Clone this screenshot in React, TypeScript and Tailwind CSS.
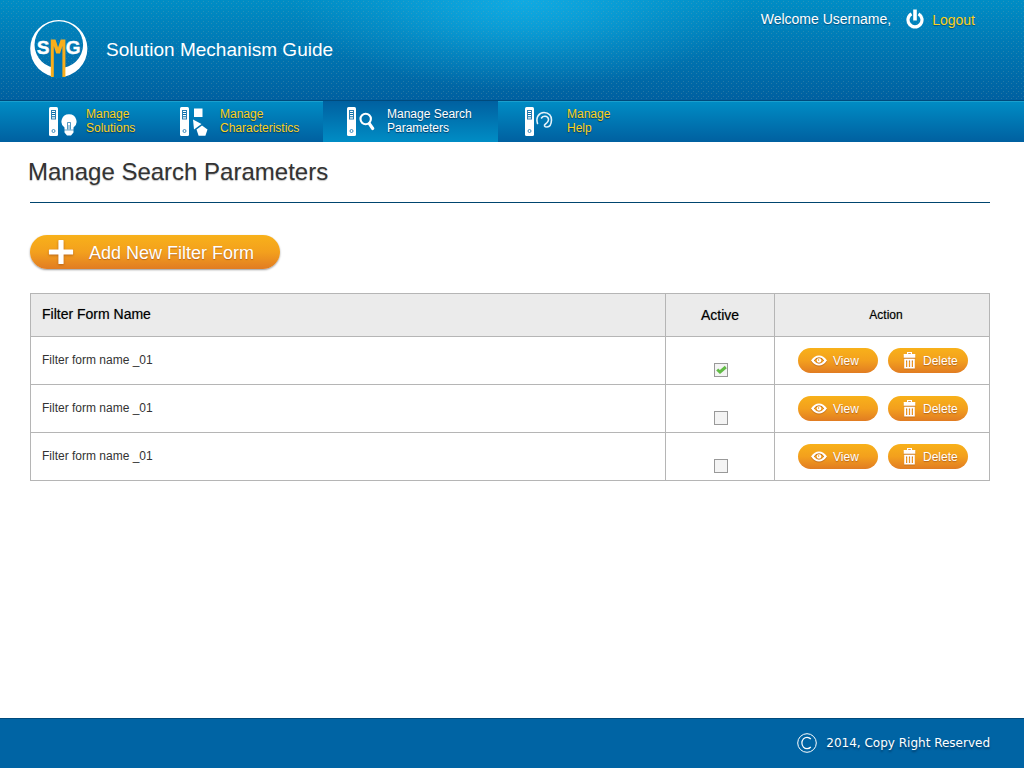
import { useState } from "react";
import type { ReactNode } from "react";

function Logo() {
  return (
    <svg viewBox="0 0 60 60" className="size-[60px] shrink-0" role="img" aria-label="SMG">
      <path
        fillRule="evenodd"
        fill="#fff"
        d="M29.800 1A28.600 28.600 0 1 1 29.800 58.200A28.600 28.600 0 1 1 29.800 1ZM29.800 2.200A24.300 23.600 0 1 0 29.800 49.400A24.300 23.600 0 1 0 29.800 2.200Z"
      />
      <path fill="#0074b3" d="M22 30H36V59H22Z" />
      <g fontFamily="'Liberation Sans', Arial, sans-serif" fontWeight="bold" fontSize="19">
        <text x="7.700" y="34.500" fill="#fff" stroke="#fff" strokeWidth="0.400">S</text>
        <text x="36.700" y="34.500" fill="#fff" stroke="#fff" strokeWidth="0.400">G</text>
      </g>
      <path fill="#f9ae1b" d="M21.800 20.500H26.500L29.100 28.500L31.700 20.500H36.400V58H33.400V27L31 34.500H27.200L24.800 27V58H21.800Z" />
    </svg>
  );
}

function Remote() {
  return (
    <>
      <rect x="0" y="0" width="9" height="29" rx="1.5" fill="#fff" />
      <rect x="2.500" y="3.500" width="4" height="8.500" fill="#fff" stroke="#2a7fb3" strokeWidth="1" />
      <path d="M3 5.500H6M3 7.500H6M3 9.800H6" stroke="#0a6fa8" strokeWidth="1.100" />
      <circle cx="4.500" cy="24" r="1.500" fill="none" stroke="#2a7fb3" strokeWidth="0.900" />
    </>
  );
}

function SolutionsIcon() {
  return (
    <svg viewBox="0 0 28 30" className="h-[30px] w-7 shrink-0" aria-hidden="true">
      <Remote />
      <path fill="#fff" d="M20 7.300A7.300 7.300 0 0 1 24.500 20.500V25.500L22 28.500H18L15.500 25.500V20.500A7.300 7.300 0 0 1 20 7.300Z" />
      <path d="M15 23H25" stroke="#0a6fa8" strokeWidth="0.600" />
      <path d="M18.500 22.500V15.500H21.500V22.500M20 18V22.500" fill="none" stroke="#0a6fa8" strokeWidth="0.700" />
    </svg>
  );
}

function CharacteristicsIcon() {
  return (
    <svg viewBox="0 0 28 30" className="h-[30px] w-7 shrink-0" aria-hidden="true">
      <Remote />
      <path fill="#fff" d="M14 1.500H22.500V10H14ZM13 12.500L21.500 17L14 22.500ZM22 18.500L27.500 22.500L25.400 28.800H18.600L16.500 22.500Z" />
    </svg>
  );
}

function SearchIcon() {
  return (
    <svg viewBox="0 0 28 30" className="h-[30px] w-7 shrink-0" aria-hidden="true">
      <Remote />
      <circle cx="18.700" cy="12" r="5.200" fill="none" stroke="#fff" strokeWidth="2.100" />
      <path d="M22.500 16.800L25.700 21.500" stroke="#fff" strokeWidth="3.200" strokeLinecap="round" />
    </svg>
  );
}

function HelpIcon() {
  return (
    <svg viewBox="0 0 28 30" className="h-[30px] w-7 shrink-0" aria-hidden="true">
      <Remote />
      <path
        d="M12.500 16.500C10.500 10.500 14 5.500 19 5.500C24 5.500 26.700 9 26.500 13C26.300 17 24.500 20 22 20C19.500 20 18.500 18.500 20.500 17C22.500 15.500 24 14 23.400 11.800C22.500 8.500 18 8.500 16.500 11"
        fill="none"
        stroke="#e4f2fa"
        strokeWidth="1.600"
        strokeLinecap="round"
      />
    </svg>
  );
}

function PowerIcon() {
  return (
    <svg viewBox="0 0 18 20" className="h-5 w-[18px]" aria-hidden="true">
      <path d="M5.500 4.800A7 7 0 1 0 12.500 4.800" fill="none" stroke="#fff" strokeWidth="3.200" />
      <path d="M7.200 0.500H10.800V11.500H7.200Z" fill="#fff" />
    </svg>
  );
}

function EyeIcon() {
  return (
    <svg viewBox="0 0 16 12" className="h-3 w-4 shrink-0 drop-shadow-[0_1px_0_#c7701a]" aria-hidden="true">
      <path fill="#fff" fillRule="evenodd" d="M0 5.500Q3.500 0.500 8 0.500T16 5.500Q12.500 10.500 8 10.500T0 5.500ZM2.800 5.500Q5 8.700 8 8.700T13.200 5.500Q11 2.300 8 2.300T2.800 5.500Z" />
      <circle cx="8" cy="5.500" r="2.300" fill="#fff" />
      <circle cx="7.600" cy="5" r="0.700" fill="#e98f1e" />
    </svg>
  );
}

function TrashIcon() {
  return (
    <svg viewBox="0 0 13 17" className="h-[17px] w-[13px] shrink-0 drop-shadow-[0_1px_0_#c7701a]" aria-hidden="true">
      <path fill="#fff" fillRule="evenodd" d="M4 0H9V2H12.300V5.800H0.700V2H4ZM5.200 1.200V2H7.800V1.200Z" />
      <path fill="#fff" fillRule="evenodd" d="M1.200 6.700H11.800V16.500H1.200ZM3 8.500V15H4.200V8.500ZM5.900 8.500V15H7.100V8.500ZM8.800 8.500V15H10V8.500Z" />
    </svg>
  );
}

function PlusIcon() {
  return (
    <svg viewBox="0 0 26 26" className="size-[26px] shrink-0 drop-shadow-[0_1px_1px_#b8651a]" aria-hidden="true">
      <path d="M11 1.500H15V11H24.500V15H15V24.500H11V15H1.500V11H11Z" fill="#fff" stroke="#fff" strokeWidth="1.200" strokeLinejoin="round" />
    </svg>
  );
}

type NavItem = { lines: [string, string]; icon: ReactNode; active?: boolean; className: string };

const navItems: NavItem[] = [
  { lines: ["Manage", "Solutions"], icon: <SolutionsIcon />, className: "w-[132px] gap-[9px] pl-[19px]" },
  { lines: ["Manage", "Characteristics"], icon: <CharacteristicsIcon />, className: "w-[161px] gap-3 pl-[18px]" },
  { lines: ["Manage Search", "Parameters"], icon: <SearchIcon />, active: true, className: "w-[175px] gap-3 pl-6" },
  { lines: ["Manage", "Help"], icon: <HelpIcon />, className: "w-[161px] gap-[14px] pl-[27px]" },
];

function PillButton({ icon, children, className }: { icon: ReactNode; children: ReactNode; className: string }) {
  return (
    <button
      type="button"
      className={`flex h-[25px] w-20 cursor-pointer items-center rounded-full bg-linear-to-b from-[#f8b11a] via-[#f3a01d] to-[#e17c22] text-xs text-white [text-shadow:0_1px_1px_#b8651a] ${className}`}
    >
      {icon}
      {children}
    </button>
  );
}

type Row = { id: number; name: string; active: boolean };

export default function App() {
  const [rows, setRows] = useState<Row[]>([
    { id: 1, name: "Filter form name _01", active: true },
    { id: 2, name: "Filter form name _01", active: false },
    { id: 3, name: "Filter form name _01", active: false },
  ]);

  const toggle = (id: number) =>
    setRows((all) => all.map((r) => (r.id === id ? { ...r, active: !r.active } : r)));

  return (
    <div className="flex min-h-screen flex-col bg-white font-['Liberation_Sans',Arial,sans-serif]">
      <header>
        <div className="bg-[radial-gradient(circle_at_3.5px_1.5px,#7fa3a54d_0.5px,transparent_0.9px),radial-gradient(circle_at_1.5px_3.5px,#7fa3a54d_0.5px,transparent_0.9px),radial-gradient(ellipse_230px_90px_at_51%_0,#10aae2_0%,#10aae2b3_30%,#10aae24d_65%,transparent_100%),linear-gradient(#008dc5,#0060a0)] bg-size-[5px_5px,5px_5px,auto,auto]">
          <div className="flex h-[100px] items-start justify-between pr-[49px] pl-[29px]">
            <div className="flex items-center gap-[17px] pt-[19px]">
              <Logo />
              <p className="pt-0.5 text-[19px] text-white">Solution Mechanism Guide</p>
            </div>
            <div className="flex items-center gap-[15px] pt-2 text-sm text-white [text-shadow:0_1px_1px_#00507f]">
              <span>Welcome Username,</span>
              <a href="#logout" className="flex items-center gap-2 text-[#fbd21c]">
                <PowerIcon />
                <span className="pt-0.5">Logout</span>
              </a>
            </div>
          </div>
        </div>
        <nav className="flex h-[42px] border-t border-[#004a7c] bg-linear-to-b from-[#008dc5] to-[#0060a0] pl-[30px] shadow-[inset_0_1px_0_#1a9fce]">
          {navItems.map((item) => (
            <a
              key={item.lines.join(" ")}
              href="#section"
              aria-current={item.active ? "page" : undefined}
              className={`flex items-center text-xs leading-[14px] [text-shadow:0_1px_1px_#003a66] ${item.className} ${
                item.active ? "bg-linear-to-b from-[#0060a0] to-[#008dc5] text-white" : "text-[#fbd21c]"
              }`}
            >
              {item.icon}
              <span className="pb-0.5">
                {item.lines[0]}
                <br />
                {item.lines[1]}
              </span>
            </a>
          ))}
        </nav>
      </header>

      <main className="flex-1 pr-[34px] pl-[30px]">
        <h1 className="-mx-0.5 pt-3 text-2xl leading-9 text-[#333] [text-shadow:0_1px_1px_#00000040]">
          Manage Search Parameters
        </h1>
        <hr className="mt-3 border-[#00456f]" />

        <button
          type="button"
          className="mt-8 flex h-[34px] w-[250px] cursor-pointer items-center gap-[15px] rounded-full bg-linear-to-b from-[#f8b11a] via-[#f3a01d] to-[#e17c22] pl-[18px] text-lg text-white shadow-[0_1px_2px_#00000066] [text-shadow:0_1px_1px_#b8651a]"
        >
          <PlusIcon />
          <span className="pt-0.5">Add New Filter Form</span>
        </button>

        <table className="mt-6 w-full table-fixed border-collapse text-xs text-[#333] [&_td]:border [&_td]:border-[#b5b5b5] [&_th]:border [&_th]:border-[#b5b5b5]">
          <thead>
            <tr className="h-[43px] bg-[#ebebeb] text-black [text-shadow:0_0_1px_#00000066]">
              <th className="px-[11px] pb-0.5 text-left text-sm font-normal">Filter Form Name</th>
              <th className="w-[109px] text-sm font-normal">Active</th>
              <th className="w-[215px] pl-2 font-normal">Action</th>
            </tr>
          </thead>
          <tbody>
            {rows.map((row) => (
              <tr key={row.id} className="h-12">
                <td className="px-[11px] pb-0.5">{row.name}</td>
                <td className="pl-0.5">
                  <label className="mx-auto mt-[18px] grid size-3.5 place-items-center">
                    <input
                      type="checkbox"
                      aria-label={`Active: ${row.name}`}
                      checked={row.active}
                      onChange={() => toggle(row.id)}
                      className="peer col-start-1 row-start-1 size-3.5 appearance-none border border-[#999] bg-[#f4f4f4]"
                    />
                    <svg
                      viewBox="0 0 11 9"
                      className="pointer-events-none invisible col-start-1 row-start-1 h-[9px] w-[11px] peer-checked:visible"
                      aria-hidden="true"
                    >
                      <path d="M1.200 4.500L4 7L9.800 2" fill="none" stroke="#62bb46" strokeWidth="3" />
                    </svg>
                  </label>
                </td>
                <td className="pl-0.5">
                  <div className="flex justify-center gap-2.5">
                    <PillButton icon={<EyeIcon />} className="gap-1.5 pl-[13px]">
                      View
                    </PillButton>
                    <PillButton icon={<TrashIcon />} className="gap-[7px] pl-[15px]">
                      Delete
                    </PillButton>
                  </div>
                </td>
              </tr>
            ))}
          </tbody>
        </table>
      </main>

      <footer className="flex h-[50px] items-center justify-end gap-[9px] border-t border-[#004a7c] bg-[#0064a4] px-[34px] pb-px font-['DejaVu_Sans',Verdana,sans-serif] text-xs text-white [text-shadow:0_2px_2px_#003a66]">
        <svg viewBox="0 0 20 20" className="size-5" aria-hidden="true">
          <circle cx="10" cy="10" r="9.300" fill="none" stroke="#fff" strokeWidth="1" />
          <path d="M13.800 6A5.200 5.700 0 1 0 13.800 14" fill="none" stroke="#fff" strokeWidth="1.200" />
        </svg>
        <p>2014, Copy Right Reserved</p>
      </footer>
    </div>
  );
}
